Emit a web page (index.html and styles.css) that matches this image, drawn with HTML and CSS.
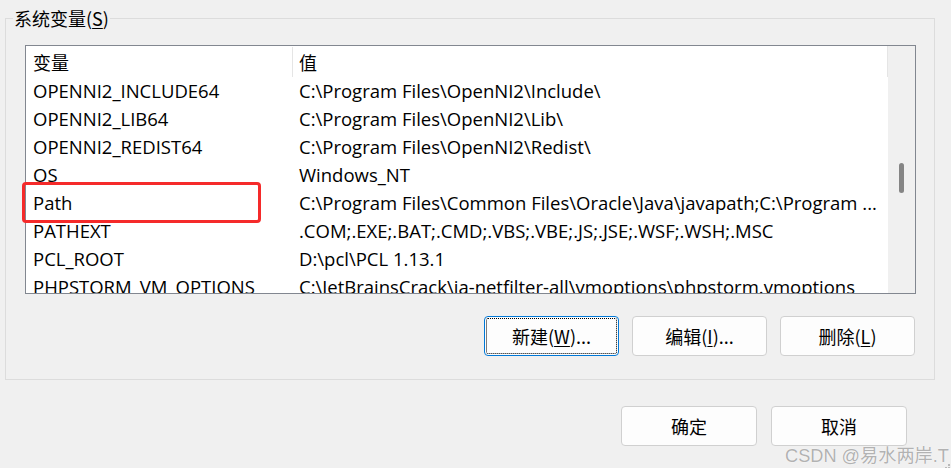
FILE: index.html
```html
<!DOCTYPE html>
<html lang="zh-CN">
<head>
<meta charset="utf-8">
<title>系统变量</title>
<link rel="stylesheet" href="styles.css">
</head>
<body>
<div class="dialog">
  <fieldset class="group">
    <legend class="group-label">系统变量(<u>S</u>)</legend>
    <div class="group-body">
      <div class="list-wrap">
        <div class="listview">
          <div class="table">
            <div class="thead">
              <div class="th c1">变量</div>
              <div class="th c2">值</div>
            </div>
            <div class="rows">
              <div class="cell c1">OPENNI2_INCLUDE64</div><div class="cell c2">C:\Program Files\OpenNI2\Include\</div>
              <div class="cell c1">OPENNI2_LIB64</div><div class="cell c2">C:\Program Files\OpenNI2\Lib\</div>
              <div class="cell c1">OPENNI2_REDIST64</div><div class="cell c2">C:\Program Files\OpenNI2\Redist\</div>
              <div class="cell c1">OS</div><div class="cell c2">Windows_NT</div>
              <div class="cell c1">Path</div><div class="cell c2">C:\Program Files\Common Files\Oracle\Java\javapath;C:\Program ...</div>
              <div class="cell c1">PATHEXT</div><div class="cell c2">.COM;.EXE;.BAT;.CMD;.VBS;.VBE;.JS;.JSE;.WSF;.WSH;.MSC</div>
              <div class="cell c1">PCL_ROOT</div><div class="cell c2">D:\pcl\PCL 1.13.1</div>
              <div class="cell c1">PHPSTORM_VM_OPTIONS</div><div class="cell c2">C:\JetBrainsCrack\ja-netfilter-all\vmoptions\phpstorm.vmoptions</div>
            </div>
          </div>
          <div class="scrollbar"><div class="thumb"></div></div>
        </div>
        <div class="mark"></div>
      </div>
      <div class="btn-row">
        <button class="btn focused">新建(<u>W</u>)...</button>
        <button class="btn">编辑(<u>I</u>)...</button>
        <button class="btn">删除(<u>L</u>)</button>
      </div>
    </div>
  </fieldset>
  <div class="footer">
    <button class="btn">确定</button>
    <button class="btn">取消</button>
  </div>
  <div class="watermark">CSDN @易水两岸.T</div>
  <svg class="grip" width="12" height="10" viewBox="0 0 12 10" aria-hidden="true">
    <rect x="9" y="0" width="2" height="2" fill="#b9b9b9"/>
    <rect x="6" y="3" width="2" height="2" fill="#b9b9b9"/>
    <rect x="9" y="3" width="2" height="2" fill="#b9b9b9"/>
    <rect x="3" y="6" width="2" height="2" fill="#b9b9b9"/>
    <rect x="6" y="6" width="2" height="2" fill="#b9b9b9"/>
    <rect x="9" y="6" width="2" height="2" fill="#b9b9b9"/>
  </svg>
</div>
</body>
</html>
```
FILE: styles.css
```css
* { box-sizing: border-box; }
html, body {
  margin: 0;
  padding: 0;
  background: #f0f0f0;
}
body {
  width: 951px;
  height: 468px;
  overflow: hidden;
  font-family: "Open Sans", "Noto Sans CJK SC", sans-serif;
  font-size: 18px;
  color: #000;
}
.dialog {
  position: relative;
  width: 951px;
  height: 468px;
}
.group {
  margin: 6px 16px 0 5px;
  padding: 0;
  border: 1px solid #dcdcdc;
  min-width: 0;
}
.group-label {
  margin-left: 7px;
  padding: 0 1px;
  line-height: 24px;
  font-family: "Noto Sans CJK SC", "Open Sans", sans-serif;
}
.group-label u { text-underline-offset: 2px; }
.group-body {
  padding: 15px 18px 23px 19px;
}
.list-wrap {
  position: relative;
  width: 891px;
}
.listview {
  display: flex;
  width: 891px;
  height: 249px;
  border: 1px solid #828790;
  background: #fff;
  overflow: hidden;
}
.table {
  width: 862px;
  flex: none;
  overflow: hidden;
}
.thead {
  display: grid;
  grid-template-columns: 267px 1fr;
  height: 31px;
  border-right: 1px solid #e5e5e5;
}
.th {
  display: flex;
  align-items: center;
  white-space: nowrap;
  font-family: "Noto Sans CJK SC", sans-serif;
}
.th.c1 {
  padding-left: 7px;
  border-right: 1px solid #e5e5e5;
  margin-top: 1px;
}
.th.c2 { padding-left: 6px; }
.rows {
  display: grid;
  grid-template-columns: 267px 1fr;
  grid-auto-rows: 28px;
}
.cell {
  display: flex;
  align-items: center;
  padding-bottom: 1px;
  white-space: nowrap;
  overflow: hidden;
  font-family: "Open Sans", sans-serif;
  font-size: 18.5px;
}
.cell.c1 { padding-left: 7px; }
.cell.c2 { padding-left: 6px; }
.mark {
  position: absolute;
  z-index: 1;
  left: -3px;
  top: 137px;
  width: 239px;
  height: 41px;
  border: 3px solid #f52a2a;
  border-radius: 4px;
  pointer-events: none;
}
.scrollbar {
  width: 27px;
  flex: none;
  background: #f0f0f0;
  display: flex;
  flex-direction: column;
  align-items: center;
}
.thumb {
  margin-top: 117px;
  width: 5px;
  height: 30px;
  border-radius: 3px;
  background: #858585;
}
.btn-row {
  display: flex;
  justify-content: flex-end;
  gap: 13px;
  margin-top: 22px;
  padding-right: 1px;
}
.btn {
  width: 135px;
  height: 40px;
  padding: 0;
  background: #fdfdfd;
  border: 1px solid #d0d0d0;
  border-radius: 4px;
  font-family: "Noto Sans CJK SC", "Open Sans", sans-serif;
  font-size: 18px;
  color: #000;
}
.btn u { text-underline-offset: 2px; }
.btn.focused {
  border-color: #0078d7;
  outline: 1px dotted #000;
  outline-offset: -3px;
}
.footer {
  display: flex;
  justify-content: flex-end;
  gap: 14px;
  margin-top: 26px;
  padding-right: 44px;
}
.footer .btn { width: 136px; }
.watermark {
  position: absolute;
  left: 785px;
  top: 438px;
  line-height: 24px;
  white-space: nowrap;
  font-family: "Liberation Sans", "Noto Sans CJK SC", sans-serif;
  font-size: 18.2px;
  color: #b2b2b2;
  text-shadow: 0 0 1px #fff, 0 0 1px #fff;
}
.grip {
  position: absolute;
  right: 0;
  bottom: 0;
}
```
